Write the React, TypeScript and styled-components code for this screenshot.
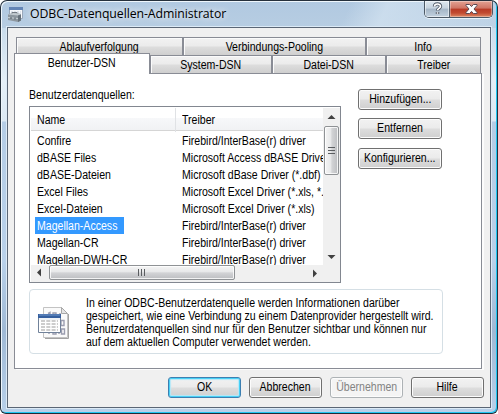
import React from "react";
import styled, { createGlobalStyle } from "styled-components";

const GlobalStyle = createGlobalStyle`
  * { box-sizing: border-box; }
  body { margin: 0; background: #fff; overflow: hidden; }
  #root { width: 498px; height: 414px; }
`;

const WindowFrame = styled.div`
  width: 498px;
  height: 414px;
  display: flex;
  flex-direction: column;
  padding: 0 5px 5px 6px;
  border: 1px solid #25303c;
  border-bottom-color: #1c2c38;
  border-radius: 7px 7px 6px 6px;
  box-shadow: inset -1px -1px 0 #1fc6f2, inset 1px 1px 0 #eef6fc;
  background:
    linear-gradient(115deg, transparent 318px, #d6e5f2aa 352px, #d3e3f155 440px, transparent 520px) 0 0 / 100% 27px no-repeat,
    linear-gradient(#b1c9e1, #b7cde2) 0 0 / 100% 27px no-repeat,
    linear-gradient(#c9dcec 27px, #e4eff7 80px, #dce9f4 120px, #b5cde6 121px, #b9d1ea 260px, #9fb9d5 330px, #b9d1ea 414px);
  font-family: "Liberation Sans", Arial, sans-serif;
  color: #000;
`;

const TitleBar = styled.header`
  height: 26px;
  flex: none;
  display: flex;
  align-items: flex-start;
`;

const TitleIcon = styled.svg`
  width: 17px;
  height: 17px;
  margin: 5px 5px 0 0;
`;

const TitleText = styled.h1`
  margin: 3px 0 0;
  padding: 0 8px 0 1px;
  height: 20px;
  line-height: 19px;
  font: 12.3px/19px "Open Sans", "Noto Sans", sans-serif;
  white-space: nowrap;
  flex: 1;
  letter-spacing: -0.08px;
  text-shadow: 0 0 6px #ffffffcc, 0 0 10px #ffffffaa;
`;

const CaptionButtons = styled.div`
  display: flex;
  width: 69px;
  height: 17px;
  margin-right: -1px;
  border: 1px solid #4c5966;
  border-top: 0;
  border-radius: 0 0 5px 5px;
  overflow: hidden;
  box-shadow: 0 1px 0 #e9f3fb;
`;

const CaptionButton = styled.button<{ $close?: boolean }>`
  flex: ${(p) => (p.$close ? "1" : "0 0 25px")};
  height: 16px;
  padding: 0;
  display: flex;
  align-items: center;
  justify-content: center;
  border: 0;
  border-right: ${(p) => (p.$close ? "0" : "1px solid #53606e")};
  box-shadow: inset 0 0 0 1px ${(p) => (p.$close ? "#ffffff55" : "#ffffff88")};
  background: ${(p) =>
    p.$close
      ? "linear-gradient(#e3a293, #cf7464 45%, #b83a26 50%, #c24b31 75%, #dd8a66)"
      : "linear-gradient(#dde7ef, #c6d3df 45%, #a4b5c6 50%, #c2d1df)"};
`;

const Client = styled.main`
  flex: 1;
  width: 484px;
  display: flex;
  flex-direction: column;
  background: #f0f0f0;
  border: 1px solid #5b6675;
  box-shadow: 0 0 0 1px #dceaf6;
  padding: 9px 7px 7px 6px;
`;

const TabRow = styled.div<{ $second?: boolean }>`
  display: flex;
  flex: none;
  height: 18px;
  width: ${(p) => (p.$second ? "467px" : "465px")};
  margin-left: ${(p) => (p.$second ? "0" : "2px")};
`;

const Tab = styled.div<{ $width: number; $active?: boolean }>`
  width: ${(p) => p.$width}px;
  height: ${(p) => (p.$active ? "21px" : "19px")};
  margin-top: ${(p) => (p.$active ? "-2px" : "0")};
  flex: none;
  display: flex;
  justify-content: center;
  line-height: ${(p) => (p.$active ? "18px" : "18px")};
  font-size: 12px;
  border: 1px solid #898c95;
  border-right-width: ${(p) => (p.$active ? 1 : 1)}px;
  border-bottom: ${(p) => (p.$active ? "0" : "1px solid #898c95")};
  box-shadow: ${(p) => (p.$active ? "none" : "inset 1px 1px 0 #fbfbfb")};
  background: ${(p) =>
    p.$active ? "#fff" : "linear-gradient(#f2f2f2, #ebebeb 48%, #dddddd 52%, #cfcfcf)"};
  position: relative;
  z-index: ${(p) => (p.$active ? 2 : 0)};
`;

/* Condensed label face, narrowed towards its anchor side. */
const Label = styled.span<{ $left?: boolean; $scale?: number }>`
  display: inline-block;
  white-space: pre;
  flex: none;
  transform: scaleX(${(p) => p.$scale ?? 0.88});
  transform-origin: ${(p) => (p.$left ? "left" : "center")} center;
`;

const Panel = styled.section`
  width: 468px;
  height: 296px;
  flex: none;
  background: #fff;
  border: 1px solid #898c95;
  box-shadow: 2px 1px 0 #fcfcfc;
  padding: 14px 0 0 14px;
  font-size: 12px;
`;

const Caption = styled.div`
  height: 18px;
  line-height: 14px;
`;

const Sources = styled.div`
  display: flex;
  align-items: flex-start;
  height: 183px;
`;

const ListBox = styled.div`
  width: 312px;
  height: 177px;
  border: 1px solid #828790;
  padding: 1px;
  display: grid;
  grid-template: 157px 17px / 292px 17px;
`;

const ListView = styled.div`
  overflow: hidden;
`;

const HeaderRow = styled.div`
  display: grid;
  grid-template-columns: 145px 147px;
  height: 23px;
  line-height: 24px;
  border-bottom: 1px solid #d5d5d5;
  background: linear-gradient(#fff 45%, #f7f8fa 46%, #f1f2f4);
`;

const HeaderCell = styled.div`
  padding-left: 6px;
  border-right: 1px solid #e0e2e5;
  & + & { border-right: 0; }
`;

const DataRow = styled.div`
  display: grid;
  grid-template-columns: 145px 147px;
  height: 17px;
  line-height: 18px;
  overflow: hidden;
`;

const ListBody = styled.div`
  padding-top: 1px;
`;

const Cell = styled.div<{ $selected?: boolean }>`
  margin-left: 4px;
  padding-left: 2px;
  width: ${(p) => (p.$selected ? "89px" : "auto")};
  background: ${(p) => (p.$selected ? "#3399ff" : "transparent")};
  color: ${(p) => (p.$selected ? "#fff" : "#000")};
`;

const ScrollTrack = styled.div<{ $horizontal?: boolean }>`
  display: flex;
  flex-direction: ${(p) => (p.$horizontal ? "row" : "column")};
  background: #f0f0f0;
  padding: ${(p) => (p.$horizontal ? "0 0 2px" : "0 1px 0 0")};
`;

const ScrollArrow = styled.svg<{ $end?: boolean }>`
  display: block;
  width: 17px;
  height: 17px;
  flex: none;
  margin: ${(p) => (p.$end ? "auto" : "0")} 0 0 ${(p) => (p.$end ? "auto" : "0")};
`;

const Thumb = styled.div<{ $horizontal?: boolean }>`
  flex: none;
  width: ${(p) => (p.$horizontal ? "186px" : "15px")};
  height: ${(p) => (p.$horizontal ? "15px" : "49px")};
  margin: ${(p) => (p.$horizontal ? "0 0 0 1px" : "1px 0 0 1px")};
  border: 1px solid #8f9295;
  border-radius: 2px;
  box-shadow: inset 0 0 0 1px #ffffffcc;
  background: linear-gradient(
    ${(p) => (p.$horizontal ? "180deg" : "90deg")},
    #f5f5f5, #e7e8e9 46%, #d3d4d6 52%, #bcbec1
  );
  display: flex;
  align-items: center;
  justify-content: center;
`;

const Corner = styled.div`
  background: #f0f0f0;
`;

const SideButtons = styled.div`
  display: flex;
  flex-direction: column;
  gap: 8px;
  margin: -17px 0 0 17px;
`;

const Button = styled.button<{ $default?: boolean; $wide?: boolean; $disabled?: boolean; $last?: boolean }>`
  width: ${(p) => (p.$wide ? 84 : 73)}px;
  height: 21px;
  margin-top: ${(p) => (p.$last ? "1px" : "0")};
  padding: 0;
  display: flex;
  justify-content: center;
  font: 12px/19px "Liberation Sans", Arial, sans-serif;
  color: ${(p) => (p.$disabled ? "#838383" : "#000")};
  border: 1px solid ${(p) => (p.$default ? "#3c7fb1" : p.$disabled ? "#adb2b5" : "#707070")};
  border-radius: 3px;
  box-shadow: ${(p) =>
    p.$default ? "inset 0 0 0 1px #48d0f6, inset 0 0 1px 2px #b5e8f8" : "inset 0 0 0 1px #fcfcfc"};
  background: ${(p) =>
    p.$disabled ? "#f4f4f4" : "linear-gradient(#f2f2f2, #ebebeb 48%, #dddddd 52%, #cfcfcf)"};
`;

const InfoBox = styled.div`
  width: 414px;
  height: 65px;
  display: flex;
  border: 1px solid #d5dfe5;
  border-radius: 4px;
  padding: 7px 0 0 8px;
  line-height: 13px;
`;

const InfoIcon = styled.svg`
  width: 32px;
  height: 34px;
  margin: 9px 16px 0 0;
`;

const InfoText = styled.div`
  display: flex;
  flex-direction: column;
  align-items: flex-start;
  width: 350px;
`;

const Footer = styled.footer`
  display: flex;
  justify-content: flex-end;
  gap: 8px;
  margin: 8px -1px 0 0;
`;

const rows: [string, string, number, number][] = [
  ["Confire", "Firebird/InterBase(r) driver", 0.88, 0.88],
  ["dBASE Files", "Microsoft Access dBASE Driver (*.dbf)", 0.88, 0.88],
  ["dBASE-Dateien", "Microsoft dBase Driver (*.dbf)", 0.88, 0.88],
  ["Excel Files", "Microsoft Excel Driver (*.xls, *.xlsx)", 0.88, 0.88],
  ["Excel-Dateien", "Microsoft Excel Driver (*.xls)", 0.88, 0.88],
  ["Magellan-Access", "Firebird/InterBase(r) driver", 0.88, 0.88],
  ["Magellan-CR", "Firebird/InterBase(r) driver", 0.88, 0.88],
  ["Magellan-DWH-CR", "Firebird/InterBase(r) driver", 0.88, 0.88],
];

const infoLines: [string, number][] = [
  ["In einer ODBC-Benutzerdatenquelle werden Informationen darüber", 0.88],
  ["gespeichert, wie eine Verbindung zu einem Datenprovider hergestellt wird.", 0.88],
  ["Benutzerdatenquellen sind nur für den Benutzer sichtbar und können nur", 0.88],
  ["auf dem aktuellen Computer verwendet werden.", 0.88],
];

function ToolboxIcon() {
  return (
    <TitleIcon viewBox="0 0 17 17">
      <path d="M2.5 1.5h13v11h-13z" fill="#f6f8fb" stroke="#9aa8ba" />
      <path d="M2 1h14v3H2z" fill="#6385b6" />
      <path d="M4 6h10M4 8h10" stroke="#c4cedb" strokeDasharray="2 1" />
      <path d="M5 8V6.5h5V8" fill="none" stroke="#737b83" />
      <path d="M1 8.5l3-1h8l2 1v6l-3 1.5L1 14z" fill="#8d979f" />
      <path d="M1 8.5l3-1h8l2 1-3 1z" fill="#c1c9ce" />
      <path d="M11 9.5l3-1v6L11 16z" fill="#66717a" />
      <path d="M1 11.5l10 1" stroke="#c8d0d5" />
      <path d="M4 11v2M8 11.5v2" stroke="#515b64" />
    </TitleIcon>
  );
}

function DataIcon() {
  return (
    <InfoIcon viewBox="0 0 32 34">
      <path d="M5.5 1.5h18l6 6v24h-24z" fill="#fafafa" stroke="#c3c3c3" />
      <path d="M30.5 8v24.5H7" fill="none" stroke="#a2a2a2" />
      <path d="M23.5 1.5v6h6z" fill="#e4e4e4" stroke="#a8a8a8" />
      <g fill="none" stroke="#9b9daf" strokeWidth="1.4">
        <path d="M10 7.5l2-1v5M15 11V7h3v4M22 7v4M23 14.5h3v5h-3zM11 23v5M15 23h3v5h-3zM21 23v5M23.5 23h3v5h-3z" />
      </g>
      <path d="M.5 8.5h22v18H.5z" fill="#fff" stroke="#71829a" />
      <path d="M0 8h23v4H0z" fill="#355f9f" />
      <path d="M1 9h21" stroke="#7197ca" />
      <path d="M3 15h17M3 18h17M3 21h17M3 24h17" stroke="#9b9b9b" strokeDasharray="4 1.3" />
      <path d="M1 13h21" stroke="#dce4ed" />
    </InfoIcon>
  );
}

export default function App() {
  return (
    <>
      <GlobalStyle />
      <WindowFrame>
        <TitleBar>
          <ToolboxIcon />
          <TitleText>ODBC-Datenquellen-Administrator</TitleText>
          <CaptionButtons>
            <CaptionButton aria-label="Hilfe">
              <svg width="11" height="14" viewBox="0 0 11 14" fill="none">
                <path d="M2.5 4.5C2.5 1 8.5 1 8.5 4.3c0 2-3 2-3 4.2M5.5 10v2" stroke="#505967" strokeWidth="3.4" />
                <path d="M2.5 4.5C2.5 1.3 8.5 1.3 8.5 4.3c0 2-3 2-3 4M5.5 10.2v1.6" stroke="#fff" strokeWidth="1.6" />
              </svg>
            </CaptionButton>
            <CaptionButton $close aria-label="Schließen">
              <svg width="13" height="12" viewBox="0 0 13 12">
                <path
                  d="M1 1.5h3.6l1.9 2.1 1.9-2.1H12v1L9 6l3 3.5v1H8.4L6.5 8.4l-1.9 2.1H1v-1L4 6 1 2.5z"
                  fill="#fff"
                  stroke="#5d4b55"
                />
              </svg>
            </CaptionButton>
          </CaptionButtons>
        </TitleBar>
        <Client>
          <TabRow>
            <Tab $width={167}><Label>Ablaufverfolgung</Label></Tab>
            <Tab $width={183}><Label>Verbindungs-Pooling</Label></Tab>
            <Tab $width={115}><Label>Info</Label></Tab>
          </TabRow>
          <TabRow $second>
            <Tab $width={136} $active><Label>Benutzer-DSN</Label></Tab>
            <Tab $width={122}><Label>System-DSN</Label></Tab>
            <Tab $width={114}><Label>Datei-DSN</Label></Tab>
            <Tab $width={95}><Label>Treiber</Label></Tab>
          </TabRow>
          <Panel>
            <Caption><Label $left>Benutzerdatenquellen:</Label></Caption>
            <Sources>
              <ListBox>
                <ListView>
                  <HeaderRow>
                    <HeaderCell><Label $left>Name</Label></HeaderCell>
                    <HeaderCell><Label $left>Treiber</Label></HeaderCell>
                  </HeaderRow>
                  <ListBody>
                    {rows.map(([name, driver, a, b]) => (
                      <DataRow key={name}>
                        <Cell $selected={name === "Magellan-Access"}><Label $left $scale={a}>{name}</Label></Cell>
                        <Cell><Label $left $scale={b}>{driver}</Label></Cell>
                      </DataRow>
                    ))}
                  </ListBody>
                </ListView>
                <ScrollTrack>
                  <ScrollArrow viewBox="0 0 17 17"><path d="M4.5 11L8.5 7l4 4z" fill="#404040" /></ScrollArrow>
                  <Thumb>
                    <svg width="7" height="8"><path d="M0 .5h7M0 3.5h7M0 6.5h7" stroke="#5a5d60" /></svg>
                  </Thumb>
                  <ScrollArrow $end viewBox="0 0 17 17"><path d="M4.5 7l4 4 4-4z" fill="#404040" /></ScrollArrow>
                </ScrollTrack>
                <ScrollTrack $horizontal>
                  <ScrollArrow viewBox="0 0 17 17"><path d="M10 3.5l-4 4 4 4z" fill="#404040" /></ScrollArrow>
                  <Thumb $horizontal>
                    <svg width="8" height="7"><path d="M.5 0v7M3.5 0v7M6.5 0v7" stroke="#5a5d60" /></svg>
                  </Thumb>
                  <ScrollArrow $end viewBox="0 0 17 17"><path d="M7 4.5l4 4-4 4z" fill="#404040" /></ScrollArrow>
                </ScrollTrack>
                <Corner />
              </ListBox>
              <SideButtons>
                <Button $wide><Label>Hinzufügen...</Label></Button>
                <Button $wide><Label>Entfernen</Label></Button>
                <Button $wide $last><Label>Konfigurieren...</Label></Button>
              </SideButtons>
            </Sources>
            <InfoBox>
              <DataIcon />
              <InfoText>
                {infoLines.map(([line, s]) => <Label key={line} $left $scale={s}>{line}</Label>)}
              </InfoText>
            </InfoBox>
          </Panel>
          <Footer>
            <Button $default><Label>OK</Label></Button>
            <Button><Label>Abbrechen</Label></Button>
            <Button $disabled disabled><Label>Übernehmen</Label></Button>
            <Button><Label>Hilfe</Label></Button>
          </Footer>
        </Client>
      </WindowFrame>
    </>
  );
}
